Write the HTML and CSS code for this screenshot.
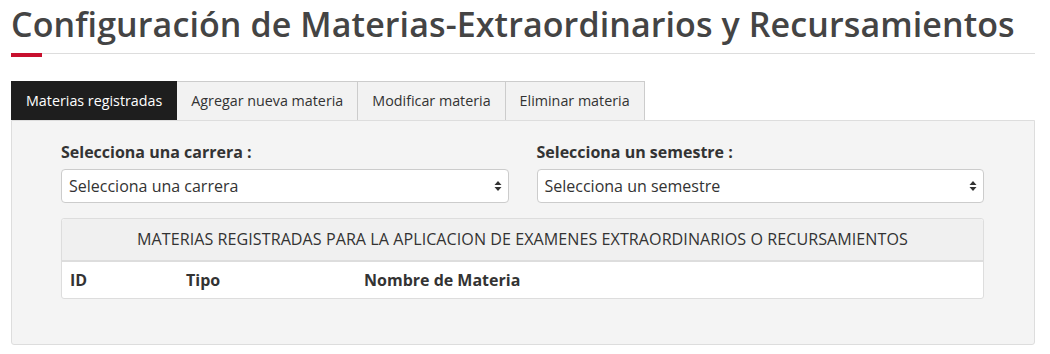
FILE: index.html
```html
<!DOCTYPE html>
<html lang="es">
<head>
    <meta charset="UTF-8">
    <meta name="viewport" content="width=device-width, initial-scale=1.0">
    <title>Configuración de Materias</title>
    <link rel="stylesheet" href="styles.css">
</head>
<body>
    <div class="page">
        <h1 class="title">Configuración de Materias-Extraordinarios y Recursamientos</h1>
        <div class="title-rule"><span></span></div>

        <ul class="tabs">
            <li class="tab active">Materias registradas</li>
            <li class="tab">Agregar nueva materia</li>
            <li class="tab">Modificar materia</li>
            <li class="tab">Eliminar materia</li>
        </ul>

        <div class="tab-panel">
            <div class="filters">
                <div class="field">
                    <label for="carrera">Selecciona una carrera :</label>
                    <div class="select">
                        <span>Selecciona una carrera</span>
                        <svg width="8" height="12" viewBox="0 0 8 12"><path d="M4 1 L7.5 5 H0.5 Z M4 11 L0.5 7 H7.5 Z" fill="#333"/></svg>
                    </div>
                </div>
                <div class="field">
                    <label for="semestre">Selecciona un semestre :</label>
                    <div class="select">
                        <span>Selecciona un semestre</span>
                        <svg width="8" height="12" viewBox="0 0 8 12"><path d="M4 1 L7.5 5 H0.5 Z M4 11 L0.5 7 H7.5 Z" fill="#333"/></svg>
                    </div>
                </div>
            </div>

            <div class="table-box">
                <div class="table-caption">MATERIAS REGISTRADAS PARA LA APLICACION DE EXAMENES EXTRAORDINARIOS O RECURSAMIENTOS</div>
                <table class="materias">
                    <thead>
                        <tr>
                            <th class="col-id">ID</th>
                            <th class="col-tipo">Tipo</th>
                            <th>Nombre de Materia</th>
                        </tr>
                    </thead>
                    <tbody></tbody>
                </table>
            </div>
        </div>
    </div>
</body>
</html>
```

FILE: styles.css
```css
/* Estilos */
body {
    font-family: "Open Sans", Arial, sans-serif;
    margin: 0;
    padding: 0;
    background-color: #ffffff;
    color: #333333;
}

.page {
    padding: 0 15px 0 11px;
}

.title {
    font-size: 34px;
    font-weight: 600;
    color: #444444;
    margin: 0;
    padding-top: 2px;
    line-height: 44px;
    letter-spacing: 0.1px;
}

.title-rule {
    border-bottom: 1px solid #dddddd;
    margin-top: 7px;
    height: 0;
}

.title-rule span {
    display: block;
    width: 31px;
    height: 4px;
    background-color: #c8102e;
}

.tabs {
    list-style: none;
    margin: 27px 0 0 0;
    padding: 0;
    display: flex;
}

.tab {
    font-size: 14.3px;
    padding: 0 14px;
    height: 38px;
    line-height: 38px;
    background-color: #f2f2f2;
    border: 1px solid #cccccc;
    border-bottom: none;
    border-left: none;
    color: #333333;
}

.tab:first-child {
    border-left: 1px solid #1e1e1e;
}

.tab.active {
    background-color: #1e1e1e;
    border-color: #1e1e1e;
    color: #ffffff;
}

.tab-panel {
    background-color: #f4f4f4;
    border: 1px solid #dddddd;
    border-radius: 0 0 3px 3px;
    padding: 20px 50px 45px 49px;
}

.filters {
    display: flex;
    gap: 28px;
}

.field {
    flex: 1;
}

.field label {
    display: block;
    font-size: 16px;
    font-weight: 700;
    color: #333333;
    margin-bottom: 6px;
    line-height: 22px;
}

.select {
    display: flex;
    align-items: center;
    justify-content: space-between;
    height: 32px;
    padding: 0 6px 0 7px;
    background-color: #ffffff;
    border: 1px solid #cccccc;
    border-radius: 4px;
    font-size: 16px;
    color: #333333;
}

.table-box {
    margin-top: 15px;
    background-color: #ffffff;
    border: 1px solid #dddddd;
    border-radius: 3px;
}

.table-caption {
    background-color: #f0f0f0;
    text-align: center;
    font-size: 16.1px;
    letter-spacing: 0.05px;
    height: 41px;
    line-height: 41px;
    border-bottom: 2px solid #dddddd;
    border-radius: 3px 3px 0 0;
    color: #333333;
}

.materias {
    width: 100%;
    border-collapse: collapse;
}

.materias th {
    text-align: left;
    font-size: 16px;
    font-weight: 700;
    padding: 0 8px;
    height: 36px;
    color: #333333;
}

.col-id {
    width: 100px;
}

.col-tipo {
    width: 162px;
}
```
